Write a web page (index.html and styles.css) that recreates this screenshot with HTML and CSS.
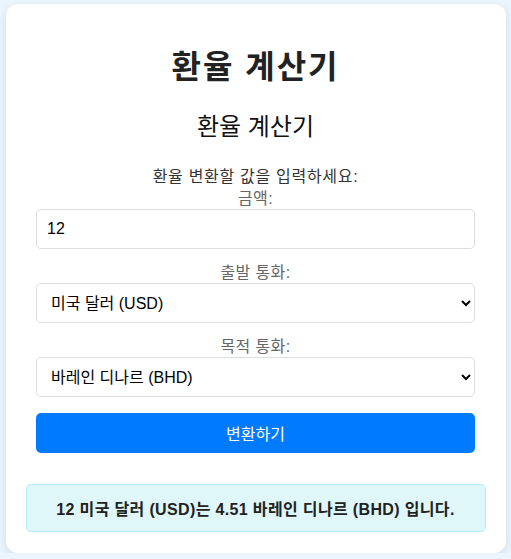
FILE: index.html
```html
<!DOCTYPE html>
<html lang="ko">
<head>
<meta charset="utf-8">
<title>환율 계산기</title>
<link rel="stylesheet" href="styles.css">
</head>
<body>
<div class="card">
  <h1 class="title">환율 계산기</h1>
  <h2 class="subtitle">환율 계산기</h2>
  <p class="intro">환율 변환할 값을 입력하세요:</p>
  <form class="form">
    <label class="label" for="amount">금액:</label>
    <input class="field" id="amount" type="text" value="12">
    <label class="label" for="from">출발 통화:</label>
    <select class="field select" id="from">
      <option>미국 달러 (USD)</option>
    </select>
    <label class="label" for="to">목적 통화:</label>
    <select class="field select" id="to">
      <option>바레인 디나르 (BHD)</option>
    </select>
    <button class="btn" type="button">변환하기</button>
  </form>
  <div class="result">12 미국 달러 (USD)는 4.51 바레인 디나르 (BHD) 입니다.</div>
</div>
</body>
</html>
```
FILE: styles.css
```css
* { box-sizing: border-box; }
body {
  margin: 0;
  background: #ebf5fd;
  font-family: "Liberation Sans", "Noto Sans CJK KR", sans-serif;
  color: #333;
}
.card {
  width: 500px;
  margin: 4px auto 0;
  background: #fff;
  border-radius: 12px;
  padding: 20px 20px 21px;
  box-shadow: 0 4px 12px rgba(0, 0, 0, 0.1);
}
.title {
  margin: 24px 0 0;
  font-size: 32px;
  line-height: 38px;
  font-weight: bold;
  letter-spacing: 2px;
  text-align: center;
  color: #222;
}
.subtitle {
  margin: 26px 0 0;
  font-size: 24px;
  line-height: 30px;
  font-weight: normal;
  text-align: center;
  color: #111;
}
.intro {
  margin: 25px 0 0;
  font-size: 16px;
  line-height: 20px;
  letter-spacing: 0.7px;
  text-align: center;
  color: #333;
}
.form {
  display: flex;
  flex-direction: column;
  padding: 0 10.5px;
}
.label {
  display: block;
  margin-top: 2px;
  font-size: 16px;
  line-height: 20px;
  letter-spacing: 0.4px;
  text-align: center;
  color: #666;
}
.field + .label { margin-top: 14px; }
.field {
  height: 40px;
  width: 100%;
  padding: 0 10px;
  border: 1px solid #ddd;
  border-radius: 5px;
  background: #fff;
  font-family: "Liberation Sans", "Noto Sans CJK KR", sans-serif;
  font-size: 16px;
  color: #000;
}
.btn {
  margin-top: 16px;
  height: 40px;
  width: 100%;
  border: none;
  border-radius: 5px;
  background: #007bff;
  color: #fff;
  font-family: "Liberation Sans", "Noto Sans CJK KR", sans-serif;
  font-size: 16px;
}
.result {
  margin-top: 31px;
  height: 48px;
  display: flex;
  align-items: center;
  justify-content: center;
  background: #e0f7fa;
  border: 1px solid #b2ebf2;
  border-radius: 5px;
  font-size: 16px;
  font-weight: bold;
  letter-spacing: 0.35px;
  color: #222;
}
```
